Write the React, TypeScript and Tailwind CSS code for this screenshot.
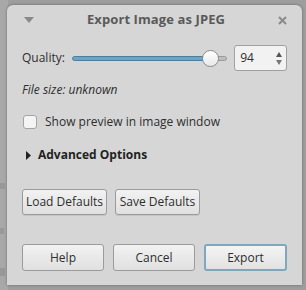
import React from "react";

export default function App() {
  const font = { fontFamily: '"Open Sans", "Noto Sans", sans-serif' };
  const btn =
    "h-[26px] whitespace-nowrap px-0 rounded-[3px] border border-[#9b9b9b] bg-gradient-to-b from-[#f2f2f2] to-[#e0e0e0] text-[12px] text-[#2e2e2e] shadow-[0_1px_0_rgba(0,0,0,0.08)]";
  return (
    <div className="relative w-[306px] h-[290px] bg-[#9e9e9e] overflow-hidden" style={font}>
      <div className="absolute left-0 top-0 w-[8px] h-[290px] bg-[#a8a8a8]" />
      <div className="absolute left-0 top-[183px] w-[5px] h-[6px] bg-[#8e8e8e] opacity-60" />
      <div className="absolute left-0 top-[228px] w-[4px] h-[6px] bg-[#8e8e8e] opacity-60" />
      <div className="absolute left-0 top-[268px] w-[5px] h-[8px] bg-[#8e8e8e] opacity-60" />
      <div className="relative ml-[7px] mt-[5px] w-[295px] h-[280px] bg-[#d6d6d6] rounded-t-[6px] shadow-[0_0_3px_rgba(0,0,0,0.35)] flex flex-col">
        <div className="h-[30px] flex items-center px-[12px] relative">
          <svg width="10" height="6" viewBox="0 0 10 6" className="ml-[5px]">
            <path d="M0 0 L10 0 L5 6 Z" fill="#8a8a8a" />
          </svg>
          <div className="flex-1 text-center text-[13px] font-bold text-[#5a5a5a] tracking-[0.1px]">
            Export Image as JPEG
          </div>
          <svg width="9" height="9" viewBox="0 0 9 9" className="mr-[3px]">
            <path d="M1 1 L8 8 M8 1 L1 8" stroke="#8a8a8a" strokeWidth="2" />
          </svg>
        </div>
        <div className="flex items-center pl-[15px] pr-[15px] mt-[10px] h-[26px]">
          <span className="text-[12px] text-[#2e2e2e] w-[50px]">Quality:</span>
          <div className="relative w-[155px] h-[20px] flex items-center">
            <div className="absolute left-0 w-[140px] h-[5px] rounded-full bg-[#6aa5c6] border border-[#4b7f9c]" />
            <div className="absolute left-[140px] w-[15px] h-[5px] rounded-r-full bg-[#bdbdbd] border border-[#9a9a9a]" />
            <div className="absolute left-[130px] w-[17px] h-[17px] rounded-full bg-gradient-to-b from-[#ffffff] to-[#e8e8e8] border border-[#8d8d8d]" />
          </div>
          <div className="ml-[8px] w-[53px] h-[26px] bg-[#f2f2f2] border border-[#a0a0a0] rounded-[3px] flex items-center">
            <span className="pl-[5px] text-[12px] text-[#2e2e2e] flex-1">94</span>
            <div className="flex flex-col items-center justify-center pr-[4px] gap-[3px]">
              <svg width="6" height="5" viewBox="0 0 6 5"><path d="M0 5 L3 0 L6 5 Z" fill="#555" /></svg>
              <svg width="6" height="5" viewBox="0 0 6 5"><path d="M0 0 L3 5 L6 0 Z" fill="#777" /></svg>
            </div>
          </div>
        </div>
        <div className="pl-[15px] mt-[10px] text-[12px] italic text-[#2e2e2e]">File size: unknown</div>
        <div className="flex items-center pl-[16px] mt-[14px]">
          <div className="w-[14px] h-[14px] bg-[#f4f4f4] border border-[#a5a5a5] rounded-[3px]" />
          <span className="ml-[8px] text-[12px] text-[#2e2e2e]">Show preview in image window</span>
        </div>
        <div className="flex items-center pl-[19px] mt-[15px]">
          <svg width="5" height="9" viewBox="0 0 5 9"><path d="M0 0 L5 4.5 L0 9 Z" fill="#222" /></svg>
          <span className="ml-[7px] text-[12px] font-bold text-[#222]">Advanced Options</span>
        </div>
        <div className="flex pl-[15px] mt-[25px] gap-[8px]">
          <button className={`w-[85px] ${btn}`}>Load Defaults</button>
          <button className={`w-[85px] ${btn}`}>Save Defaults</button>
        </div>
        <div className="flex pl-[15px] mt-[29px] gap-[9px]">
          <button className="w-[82px] h-[27px] rounded-[3px] border border-[#9b9b9b] bg-gradient-to-b from-[#f2f2f2] to-[#e0e0e0] text-[12px] text-[#2e2e2e]">Help</button>
          <button className="w-[82px] h-[27px] rounded-[3px] border border-[#9b9b9b] bg-gradient-to-b from-[#f2f2f2] to-[#e0e0e0] text-[12px] text-[#2e2e2e]">Cancel</button>
          <button className="w-[83px] h-[27px] rounded-[3px] border-2 border-[#7fa7bd] bg-gradient-to-b from-[#f4f4f4] to-[#e2e2e2] text-[12px] text-[#2e2e2e]">Export</button>
        </div>
      </div>
    </div>
  );
}
